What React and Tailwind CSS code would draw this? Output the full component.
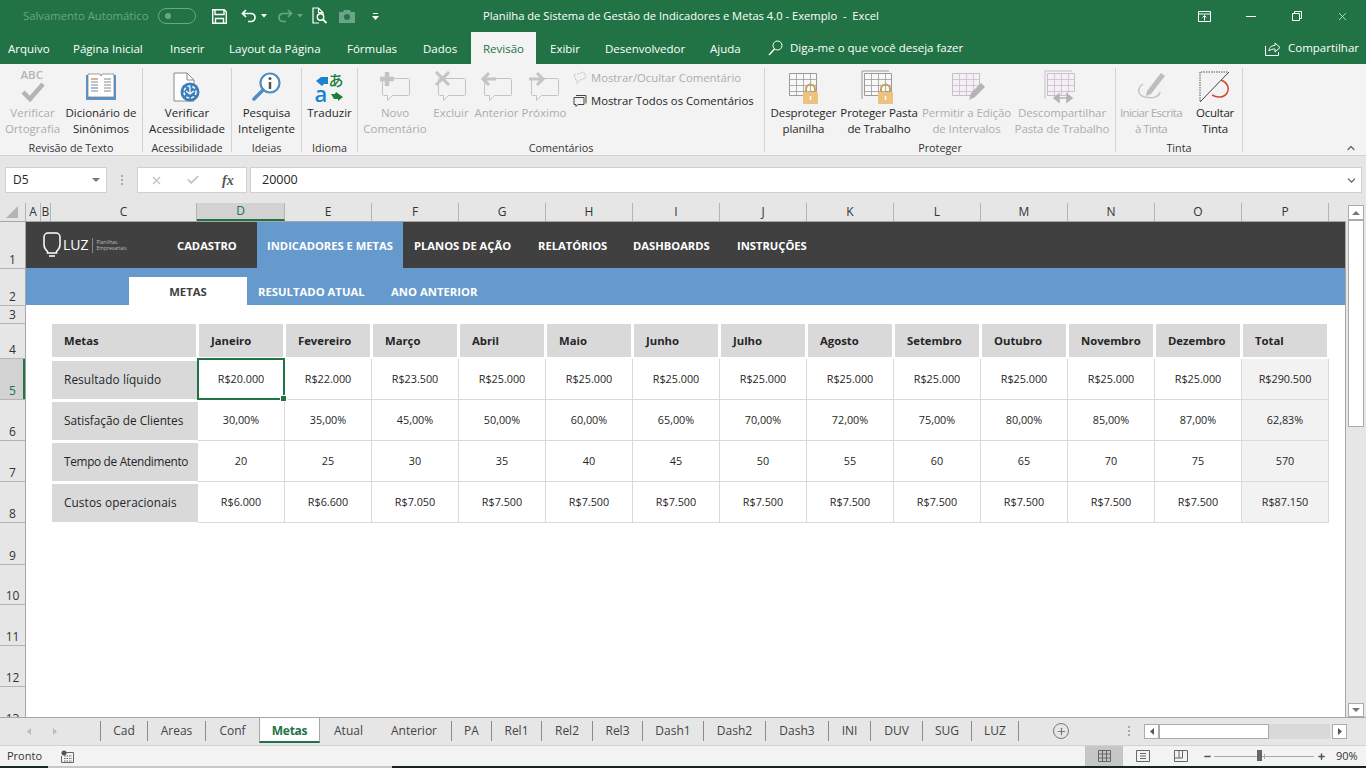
import { ChevronDown, ChevronUp, Minus, Plus, X, Check } from 'lucide-react';

const tabs = [
  ['Arquivo', 'w-[73px] pl-2'],
  ['Página Inicial', 'w-[97px]'],
  ['Inserir', 'w-[59px]'],
  ['Layout da Página', 'w-[118px]'],
  ['Fórmulas', 'w-[76px]'],
  ['Dados', 'w-[48px]'],
];
const tabsAfter = [
  ['Exibir', 'w-[55px]'],
  ['Desenvolvedor', 'w-[105px]'],
  ['Ajuda', 'w-[58px]'],
];
const columns = [
  ['A', 'w-[15px]'], ['B', 'w-[10px]'], ['C', 'w-[146px]'], ['D', 'w-[88px]'], ['E', 'w-[87px]'], ['F', 'w-[87px]'], ['G', 'w-[87px]'],
  ['H', 'w-[87px]'], ['I', 'w-[87px]'], ['J', 'w-[87px]'], ['K', 'w-[87px]'], ['L', 'w-[87px]'], ['M', 'w-[87px]'], ['N', 'w-[87px]'],
  ['O', 'w-[87px]'], ['P', 'w-[87px]'],
];
const rowHeads = [
  ['1', 'h-[47px]'], ['2', 'h-[37px]'], ['3', 'h-[18px]'], ['4', 'h-[35px]'], ['5', 'h-[41px]'], ['6', 'h-[41px]'], ['7', 'h-[41px]'],
  ['8', 'h-[41px]'], ['9', 'h-[42px]'], ['10', 'h-[40px]'], ['11', 'h-[41px]'], ['12', 'h-[41px]'], ['13', 'h-[41px]'],
];
const months = ['Janeiro', 'Fevereiro', 'Março', 'Abril', 'Maio', 'Junho', 'Julho', 'Agosto', 'Setembro', 'Outubro', 'Novembro', 'Dezembro', 'Total'];
const rows = [
  ['Resultado líquido', 'tracking-[0.1px]', ['R$20.000', 'R$22.000', 'R$23.500', 'R$25.000', 'R$25.000', 'R$25.000', 'R$25.000', 'R$25.000', 'R$25.000', 'R$25.000', 'R$25.000', 'R$25.000', 'R$290.500']],
  ['Satisfação de Clientes', '', ['30,00%', '35,00%', '45,00%', '50,00%', '60,00%', '65,00%', '70,00%', '72,00%', '75,00%', '80,00%', '85,00%', '87,00%', '62,83%']],
  ['Tempo de Atendimento', 'tracking-[-0.3px]', ['20', '25', '30', '35', '40', '45', '50', '55', '60', '65', '70', '75', '570']],
  ['Custos operacionais', 'tracking-[0.1px]', ['R$6.000', 'R$6.600', 'R$7.050', 'R$7.500', 'R$7.500', 'R$7.500', 'R$7.500', 'R$7.500', 'R$7.500', 'R$7.500', 'R$7.500', 'R$7.500', 'R$87.150']],
];
const sheets = [
  ['Cad', 'w-[47px]'], ['Areas', 'w-[58px]'], ['Conf', 'w-[53px]'], ['Metas', 'w-[61px]'], ['Atual', 'w-[57px]'], ['Anterior', 'w-[75px]'],
  ['PA', 'w-[40px]'], ['Rel1', 'w-[50px]'], ['Rel2', 'w-[51px]'], ['Rel3', 'w-[50px]'], ['Dash1', 'w-[61px]'], ['Dash2', 'w-[62px]'],
  ['Dash3', 'w-[63px]'], ['INI', 'w-[42px]'], ['DUV', 'w-[52px]'], ['SUG', 'w-[49px]'], ['LUZ', 'w-[47px]'],
];

function Bubble({ mark, dim = true }) {
  const c = dim ? '#c4c4c4' : '#555';
  return (
    <svg width="34" height="32" viewBox="0 0 34 32" fill="none">
      <path d="M5.5 7.5h25a1 1 0 0 1 1 1v15a1 1 0 0 1-1 1h-16l-5 5v-5h-4a1 1 0 0 1-1-1v-15a1 1 0 0 1 1-1z" stroke={c} fill="#f3f3f3" />
      {mark === 'plus' && <path d="M9 1v14M2 8h14" stroke={c} strokeWidth="4.5" />}
      {mark === 'x' && <path d="M2 1l13 13M15 1L2 14" stroke={c} strokeWidth="3" />}
      {mark === 'prev' && <path d="M16 8H4M9 2L3 8l6 6" stroke={c} strokeWidth="3" />}
      {mark === 'next' && <path d="M2 8h13M10 2l6 6-6 6" stroke={c} strokeWidth="3" />}
    </svg>
  );
}

function Grid({ locked, pencil, arrows, double }) {
  const line = locked ? '#9a9a9a' : '#c9bccb';
  return (
    <svg width="36" height="34" viewBox="0 0 36 34" fill="none">
      {double && <path d="M1 29V1h27" stroke={line} />}
      <path d="M3.5 3.500h27v18h-6l-3 4h-18z" fill={locked ? '#f8f8f8' : '#f5f0f6'} stroke={line} />
      <path d="M3.5 9.5h27M3.5 15.5h27M3.5 21.5h21M10.5 3.5v22M17.5 3.5v22M24.5 3.5v18" stroke={line} strokeWidth=".8" />
      {locked && (
        <g>
          <path d="M20 23v-4a4.500 4.500 0 0 1 9 0v4" stroke="#cda05c" strokeWidth="2" />
          <rect x="17" y="22" width="15" height="12" rx="1" fill="#edc27e" />
          <path d="M24.500 26v4" stroke="#fff" strokeWidth="1.5" />
        </g>
      )}
      {pencil && <path d="M20 30l2-7 10-10 4 4-10 10z" fill="#b4b4b4" />}
      {arrows && <path d="M11 28h16M15 24l-5 4 5 4zM23 24l5 4-5 4z" stroke="#b4b4b4" fill="#b4b4b4" strokeWidth="1.5" />}
    </svg>
  );
}

function RibbonBtn({ icon, lines, dim, className, textClass = '' }) {
  return (
    <div className={`flex flex-col items-center ${className}`}>
      <div className="flex h-[37px] items-center justify-center">{icon}</div>
      <div className={`whitespace-nowrap text-center text-[11.5px] leading-4 ${dim ? 'text-[#adadad]' : 'text-[#262626]'} ${textClass}`}>
        {lines.map((l) => <div key={l}>{l}</div>)}
      </div>
    </div>
  );
}

function Group({ label, className, children }) {
  return (
    <div className={`flex h-[84px] flex-col border-r border-[#d2d2d2] ${className}`}>
      <div className="flex flex-1">{children}</div>
      <div className="-mb-[3px] text-center text-[10.8px] leading-[14px] text-[#333]">{label}</div>
    </div>
  );
}

function TitleBar() {
  return (
    <div className="flex h-8 items-center bg-[#217346] text-white">
      <span className="ml-[23px] w-[135px] whitespace-nowrap text-[11.3px] text-[#6aa587]">Salvamento Automático</span>
      <div className="flex h-4 w-[38px] items-center rounded-full border border-[#6aa587] pl-[6px]">
        <div className="size-[6px] rounded-full bg-[#6aa587]" />
      </div>
      <svg className="ml-[16px]" width="15" height="15" viewBox="0 0 15 15" fill="none">
        <path d="M.7.7h11.5l2.1 2.1v11.5H.7z" stroke="#fff" strokeWidth="1.4" />
        <path d="M3 1v4.5h9V1M3.5 14V9.5h8V14" stroke="#fff" strokeWidth="1.4" />
      </svg>
      <svg className="ml-[14px]" width="16" height="14" viewBox="0 0 16 14" fill="none">
        <path d="M5 1L1.5 4.5 5 8M2 4.5h8a4 4 0 0 1 0 8H7" stroke="#fff" strokeWidth="1.7" />
      </svg>
      <svg className="ml-[4px]" width="6" height="4" viewBox="0 0 6 4"><path d="M0 0h6L3 3.5z" fill="#fff" /></svg>
      <svg className="ml-[10px]" width="16" height="14" viewBox="0 0 16 14" fill="none">
        <path d="M11 1l3.5 3.5L11 8M14 4.5H6a4 4 0 0 0 0 8h3" stroke="#6aa587" strokeWidth="1.7" />
      </svg>
      <svg className="ml-[4px]" width="6" height="4" viewBox="0 0 6 4"><path d="M0 0h6L3 3.5z" fill="#6aa587" /></svg>
      <svg className="ml-[9px]" width="16" height="18" viewBox="0 0 16 18" fill="none">
        <path d="M11 8V5.5L6.5 1H1v15h6M6.5 1v4.5H11" stroke="#fff" strokeWidth="1.2" />
        <circle cx="8.5" cy="10" r="3.2" stroke="#fff" strokeWidth="1.4" />
        <path d="M11 12.5l3.5 3.5" stroke="#fff" strokeWidth="1.8" />
      </svg>
      <svg className="ml-[11px]" width="16" height="13" viewBox="0 0 16 13">
        <path d="M0 2h4l1-2h6l1 2h4v11H0z" fill="#6aa587" />
        <circle cx="8" cy="7" r="3" fill="#217346" />
      </svg>
      <svg className="ml-[17px]" width="7" height="7" viewBox="0 0 7 7" fill="#fff">
        <path d="M1 0h5v1H1zM0 3h7L3.5 7z" />
      </svg>
      <span className="ml-[104px] whitespace-nowrap text-[11.2px]">Planilha de Sistema de Gestão de Indicadores e Metas 4.0 - Exemplo&nbsp; -&nbsp; Excel</span>
      <div className="ml-auto flex items-center">
        <svg width="13" height="11" viewBox="0 0 13 11" fill="none">
          <path d="M.5.5h12v10H.5zM.5 3h12M6.5 9.5V4.5M4.5 6.5l2-2 2 2" stroke="#fff" />
        </svg>
        <div className="ml-[35px] h-px w-[10px] bg-white" />
        <svg className="ml-[36px]" width="10" height="10" viewBox="0 0 10 10" fill="none">
          <path d="M.5 2.5h7v7h-7zM2.5 2.5v-2h7v7h-2" stroke="#fff" />
        </svg>
        <X className="ml-[34px] mr-[17px] size-[13px]" strokeWidth={1.2} absoluteStrokeWidth />
      </div>
    </div>
  );
}

function TabsBar() {
  return (
    <div className="flex h-8 items-end bg-[#217346] text-[11.5px] text-white">
      {tabs.map(([t, w]) => <div key={t} className={`${w} h-8 shrink-0 leading-[34px]`}>{t}</div>)}
      <div className="h-8 w-[65px] shrink-0 bg-[#f3f3f3] text-center leading-[34px] text-[#217346]">Revisão</div>
      <div className="w-[14px] shrink-0" />
      {tabsAfter.map(([t, w]) => <div key={t} className={`${w} h-8 shrink-0 leading-[34px]`}>{t}</div>)}
      <div className="flex h-8 items-center gap-[7px]">
        <svg width="15" height="16" viewBox="0 0 15 16" fill="none">
          <circle cx="9.5" cy="5.5" r="4.5" stroke="#fff" />
          <path d="M6.5 9L1 15" stroke="#fff" strokeWidth="1.4" />
        </svg>
        <span className="whitespace-nowrap">Diga-me o que você deseja fazer</span>
      </div>
      <div className="ml-auto mr-[7px] flex h-8 items-center gap-[7px]">
        <svg width="16" height="15" viewBox="0 0 16 15" fill="none">
          <path d="M.5 5v9.5h13V11M4 10c0-4 3-5.5 6-5.5V2l5 4.5-5 4.5V8c-2.5 0-4.500.5-6 2z" stroke="#fff" />
        </svg>
        <span>Compartilhar</span>
      </div>
    </div>
  );
}

function Ribbon() {
  return (
    <div className="relative flex h-[92px] items-start border-b border-[#d2d2d2] bg-[#f3f3f3] pt-1">
      <Group label="Revisão de Texto" className="w-[143px]">
        <RibbonBtn dim className="ml-[3px] w-[59px]" lines={['Verificar', 'Ortografia']} icon={
          <div className="relative h-[36px] w-[28px]">
            <span className="absolute left-[2px] top-0 text-[11.5px] font-semibold leading-3 text-[#b4b4b4]">ABC</span>
            <svg className="absolute left-[2px] top-[13px]" width="24" height="20" viewBox="0 0 24 20" fill="none"><path d="M2 10l7 7L22 2" stroke="#b4b4b4" strokeWidth="4.5" /></svg>
          </div>
        } />
        <RibbonBtn className="w-[78px]" lines={['Dicionário de', 'Sinônimos']} icon={
          <svg width="32" height="28" viewBox="0 0 32 28" fill="none">
            <path d="M1 2h30v25H1z" fill="#5b94c9" />
            <path d="M3 1h12l1 2 1-2h12v23H3z" fill="#fff" stroke="#777" strokeWidth=".7" />
            <path d="M6 6h7" stroke="#d2553a" /><path d="M6 9h7M6 12h7" stroke="#888" /><path d="M6 15h7" stroke="#3e7fbf" /><path d="M6 18h7" stroke="#888" />
            <path d="M19 6h7M19 9h7M19 12h7M19 15h7M19 18h7" stroke="#888" />
          </svg>
        } />
      </Group>
      <Group label="Acessibilidade" className="w-[89px]">
        <RibbonBtn className="w-full" lines={['Verificar', 'Acessibilidade']} icon={
          <svg width="28" height="30" viewBox="0 0 28 30" fill="none">
            <path d="M1 1h13l7 7v21H1z" fill="#fff" stroke="#8a8a8a" />
            <path d="M14 1v7h7" stroke="#8a8a8a" />
            <circle cx="17" cy="20" r="9.500" fill="#3d7eb8" />
            <circle cx="17" cy="20" r="6" stroke="#fff" strokeWidth="1.5" strokeDasharray="3 2" />
            <path d="M17 15v6M13 19l4 3 4-3" stroke="#fff" strokeWidth="1.3" />
          </svg>
        } />
      </Group>
      <Group label="Ideias" className="w-[70px]">
        <RibbonBtn className="w-full" lines={['Pesquisa', 'Inteligente']} icon={
          <svg width="30" height="30" viewBox="0 0 30 30" fill="none">
            <circle cx="18" cy="11" r="9.500" fill="#fff" stroke="#4d8cc4" strokeWidth="2.200" />
            <path d="M11 18L2 27" stroke="#4d8cc4" strokeWidth="3.500" strokeLinecap="round" />
            <circle cx="18" cy="6.500" r="1.500" fill="#555" />
            <path d="M18 10v7" stroke="#555" strokeWidth="2.500" />
          </svg>
        } />
      </Group>
      <Group label="Idioma" className="w-[56px]">
        <RibbonBtn className="w-full" lines={['Traduzir']} icon={
          <div className="relative h-[30px] w-[28px]">
            <span className="absolute right-0 top-[-1px] font-['Noto_Sans_CJK_JP',sans-serif] text-[15px] font-medium leading-[17px] text-[#1d7f3c]">あ</span>
            <span className="absolute bottom-[-2px] left-[-1px] text-[22px] font-semibold leading-[22px] text-[#1b82d1]">a</span>
            <svg className="absolute left-0 top-[5px]" width="12" height="9" viewBox="0 0 12 9"><path d="M12 0v7H8L6 9 0 4l5-4z" fill="#1b82d1" /></svg>
            <svg className="absolute bottom-[1px] right-[1px]" width="12" height="9" viewBox="0 0 12 9"><path d="M0 2h4l1-2 7 5-5 4V7H3z" fill="#1d7f3c" /></svg>
          </div>
        } />
      </Group>
      <Group label="Comentários" className="w-[407px]">
        <RibbonBtn dim className="ml-[2px] w-[70px]" lines={['Novo', 'Comentário']} icon={<Bubble mark="plus" />} />
        <RibbonBtn dim className="w-[42px]" lines={['Excluir']} icon={<Bubble mark="x" />} />
        <RibbonBtn dim className="ml-[1px] w-[47px]" lines={['Anterior']} icon={<Bubble mark="prev" />} />
        <RibbonBtn dim className="w-[48px]" lines={['Próximo']} icon={<Bubble mark="next" />} />
        <div className="ml-[5px] flex flex-col gap-[7px] pt-[2px] text-[11.3px] leading-4">
          <div className="flex items-center gap-[4px] text-[#adadad]">
            <svg width="14" height="14" viewBox="0 0 14 14" fill="none"><path d="M1 4l10-3 2 6-6 2-3 4V9L3 9z" stroke="#c4c4c4" strokeDasharray="2 1" /></svg>
            <span className="whitespace-nowrap">Mostrar/Ocultar Comentário</span>
          </div>
          <div className="flex items-center gap-[4px] text-[#262626]">
            <svg width="14" height="14" viewBox="0 0 14 14" fill="none"><path d="M3 1.500h10v8M1 3.500h10v7H5l-2 2v-2H1z" stroke="#444" /></svg>
            <span className="whitespace-nowrap">Mostrar Todos os Comentários</span>
          </div>
        </div>
      </Group>
      <Group label="Proteger" className="w-[351px]">
        <RibbonBtn className="ml-[2px] w-[73px]" lines={['Desproteger', 'planilha']} textClass="tracking-[-0.1px]" icon={<Grid locked />} />
        <RibbonBtn className="w-[78px]" lines={['Proteger Pasta', 'de Trabalho']} textClass="tracking-[-0.1px]" icon={<Grid locked double />} />
        <RibbonBtn dim className="ml-[1px] w-[95px]" lines={['Permitir a Edição', 'de Intervalos']} textClass="tracking-[-0.1px]" icon={<Grid pencil />} />
        <RibbonBtn dim className="w-[96px]" lines={['Descompartilhar', 'Pasta de Trabalho']} textClass="tracking-[-0.1px]" icon={<Grid arrows double />} />
      </Group>
      <Group label="Tinta" className="w-[127px]">
        <RibbonBtn dim className="w-[69px]" lines={['Iniciar Escrita', 'à Tinta']} textClass="tracking-[-0.6px] ml-[1px]" icon={
          <svg width="32" height="32" viewBox="0 0 32 32" fill="none">
            <path d="M12 20L26 2l4 3-14 18-5 2z" fill="#bdbdbd" />
            <path d="M8 13c-6 4-6 11 2 13s14 0 15-5" stroke="#c4c4c4" strokeWidth="1.500" />
          </svg>
        } />
        <RibbonBtn className="ml-[5px] w-[50px]" lines={['Ocultar', 'Tinta']} textClass="tracking-[-0.2px]" icon={
          <svg width="32" height="32" viewBox="0 0 32 32" fill="none">
            <path d="M1 30V1h28" stroke="#555" strokeDasharray="1.500 1" />
            <path d="M30 1L1 31" stroke="#444" />
            <path d="M22 9c6 2 9 8 6 13s-10 5-15 2" stroke="#d1492e" strokeWidth="1.500" />
          </svg>
        } />
      </Group>
      <ChevronUp className="absolute bottom-[1px] right-[9px] size-[12px] text-[#666]" strokeWidth={2.500} />
    </div>
  );
}

function FormulaBar() {
  return (
    <div className="flex h-[47px] items-start bg-[#e6e6e6] pl-[5px] pt-[11px]">
      <div className="flex h-[26px] w-[102px] items-center justify-between border border-[#d0d0d0] bg-white pl-[7px] pr-[6px] text-[12px] text-[#262626]">
        D5
        <svg width="8" height="4" viewBox="0 0 8 4"><path d="M0 0h8L4 4z" fill="#777" /></svg>
      </div>
      <div className="ml-[14px] mt-[8px] flex h-[10px] flex-col justify-between">
        <div className="size-[2px] bg-[#aaa]" /><div className="size-[2px] bg-[#aaa]" /><div className="size-[2px] bg-[#aaa]" />
      </div>
      <div className="ml-[14px] flex h-[26px] w-[110px] items-center border border-[#d0d0d0] bg-white pl-[12px]">
        <X className="size-[13px] text-[#c0c0c0]" strokeWidth={2} />
        <Check className="ml-[23px] size-[14px] text-[#c0c0c0]" strokeWidth={3} />
        <span className="ml-[22px] font-['Liberation_Serif',serif] text-[14px] font-bold italic text-[#555]">fx</span>
      </div>
      <div className="ml-[3px] flex h-[26px] w-[1112px] items-center justify-between border border-[#d0d0d0] bg-white pl-[11px] pr-[3px] text-[12.5px] text-[#262626]">
        20000
        <ChevronDown className="size-[13px] text-[#555]" strokeWidth={2} />
      </div>
    </div>
  );
}

function ColumnHeads() {
  return (
    <div className="flex h-[18px] bg-[#e6e6e6] text-[12px] leading-[18px] text-[#333]">
      <div className="flex w-[26px] items-center justify-center border-r border-[#b4b4b4]">
        <svg className="ml-[-2px]" width="12" height="12" viewBox="0 0 12 12"><path d="M12 0v12H0z" fill="#b4b4b4" /></svg>
      </div>
      {columns.map(([c, w]) => (
        <div key={c} className={`${w} shrink-0 border-r border-[#b4b4b4] text-center ${c === 'D' ? 'border-b-2 border-b-[#217346] bg-[#d2d2d2] leading-[16px] text-[#217346]' : ''}`}>{c}</div>
      ))}
    </div>
  );
}

function RowHeads() {
  return (
    <div className="h-[496px] w-[26px] shrink-0 overflow-hidden border-r border-t border-[#a6a6a6] bg-[#e6e6e6] text-[12px] text-[#333]">
      {rowHeads.map(([r, h]) => (
        <div key={r} className={`${h} relative flex items-end justify-center overflow-hidden border-b border-[#b4b4b4] leading-[17px] ${r === '5' ? 'bg-[#d2d2d2] text-[#217346]' : ''}`}>
          {r}
          {r === '5' && <div className="absolute bottom-0 right-0 top-0 w-[2px] bg-[#217346]" />}
        </div>
      ))}
    </div>
  );
}

function Sheet() {
  return (
    <div className="h-[496px] w-[1320px] shrink-0 border-r border-t border-[#a6a6a6] bg-white font-['Open_Sans',sans-serif]">
      <div className="flex h-[46px] items-stretch bg-[#404040] text-[11.2px] font-bold text-white">
        <div className="ml-[17px] flex w-[108px] items-center">
          <svg width="18" height="26" viewBox="0 0 18 26" fill="none">
            <path d="M5 1h8a4 4 0 0 1 4 4v8c0 3-2 5-3.500 6.500V21h-9v-1.500C3 18 1 16 1 13V5a4 4 0 0 1 4-4zM6 24h6" stroke="#fff" strokeWidth="1.500" />
          </svg>
          <span className="ml-[2px] text-[14px] font-normal leading-none">LUZ</span>
          <div className="ml-[3px] h-[15px] w-px bg-[#888]" />
          <div className="ml-[4px] whitespace-nowrap text-[5px] font-normal leading-[6px] text-[#bbb]">Planilhas<br />Empresariais</div>
        </div>
        <div className="ml-[26px] flex w-[80px] items-center pt-[2px]">CADASTRO</div>
        <div className="flex w-[146px] items-center justify-center whitespace-nowrap bg-[#6699cc] pt-[2px]">INDICADORES E METAS</div>
        <div className="ml-[11px] flex w-[124px] items-center whitespace-nowrap pt-[2px]">PLANOS DE AÇÃO</div>
        <div className="flex w-[95px] items-center pt-[2px]">RELATÓRIOS</div>
        <div className="flex w-[104px] items-center pt-[2px]">DASHBOARDS</div>
        <div className="flex items-center pt-[2px]">INSTRUÇÕES</div>
      </div>
      <div className="flex h-[37px] items-end bg-[#6699cc] text-[11.3px] font-bold text-white">
        <div className="ml-[103px] flex h-[28px] w-[118px] items-center justify-center bg-white pt-[2px] text-[#404040]">METAS</div>
        <div className="ml-[11px] flex h-[28px] w-[133px] items-center whitespace-nowrap pt-[2px]">RESULTADO ATUAL</div>
        <div className="flex h-[28px] items-center whitespace-nowrap pt-[2px]">ANO ANTERIOR</div>
      </div>
      <div className="flex flex-col pl-[26px] pt-[19px] text-[10.8px] text-[#262626]">
        <div className="flex h-[33px] gap-[3px] text-[11.3px] font-bold">
          <div className="flex w-[144px] items-center bg-[#d9d9d9] pl-3 pt-[2px]">Metas</div>
          {months.map((m) => (
            <div key={m} className="flex w-[84px] items-center bg-[#d9d9d9] pl-3 pt-[2px]">{m}</div>
          ))}
        </div>
        <div className="h-[2px]" />
        {rows.map(([label, spacing, values], r) => (
          <div key={label} className="flex h-[41px]">
            <div className="flex w-[146px] shrink-0 items-center pt-px">
              <div className={`flex h-[38px] w-full items-center whitespace-nowrap bg-[#d9d9d9] pl-3 text-[11.8px] ${spacing}`}>{label}</div>
            </div>
            {values.map((v, i) => {
              const selected = r === 0 && i === 0;
              return (
                <div key={i} className={`relative flex w-[87px] shrink-0 items-center justify-center border-b border-r border-[#d9d9d9] ${i === 12 ? 'bg-[#f2f2f2]' : ''} ${selected ? 'z-10' : ''}`}>
                  {v}
                  {selected && (
                    <div className="absolute -bottom-px -left-[1px] -right-px -top-px border-2 border-[#217346]">
                      <div className="absolute -bottom-[4px] -right-[4px] size-[7px] border border-white bg-[#217346]" />
                    </div>
                  )}
                </div>
              );
            })}
          </div>
        ))}
      </div>
    </div>
  );
}

function VScroll() {
  return (
    <div className="ml-[2px] flex h-[514px] w-[16px] shrink-0 flex-col items-stretch pt-[2px]">
      <div className="flex h-[15px] items-center justify-center border border-[#ababab] bg-white">
        <svg width="8" height="4" viewBox="0 0 8 4"><path d="M0 4h8L4 0z" fill="#777" /></svg>
      </div>
      <div className="h-[207px] border border-[#ababab] bg-white" />
      <div className="flex-1 bg-[#e6e6e6]" />
      <div className="flex h-[14px] items-center justify-center border border-[#ababab] bg-white">
        <svg width="8" height="4" viewBox="0 0 8 4"><path d="M0 0h8L4 4z" fill="#777" /></svg>
      </div>
    </div>
  );
}

function SheetTabs() {
  return (
    <div className="flex h-[28px] border-t border-[#a6a6a6] bg-[#e6e6e6] text-[12px] text-[#444]">
      <div className="flex w-[100px] shrink-0 items-center gap-[22px] pl-[27px]">
        <svg width="4" height="7" viewBox="0 0 4 7"><path d="M4 0v7L0 3.500z" fill="#bbb" /></svg>
        <svg width="4" height="7" viewBox="0 0 4 7"><path d="M0 0v7l4-3.500z" fill="#bbb" /></svg>
      </div>
      <div className="mt-[3px] h-[20px] border-l border-[#8c8c8c]" />
      {sheets.map(([s, w]) => s === 'Metas' ? (
        <div key={s} className={`${w} -mt-px h-[26px] shrink-0 border-x border-t border-[#a6a6a6] border-b-2 border-b-[#217346] bg-white text-center font-bold leading-[25px] tracking-[-0.3px] text-[#217346]`}>{s}</div>
      ) : (
        <div key={s} className="flex">
          <div className={`${w} mt-[3px] h-[20px] shrink-0 text-center leading-[20px] ${s === 'Conf' || s === 'Atual' ? '' : 'border-r border-[#8c8c8c]'}`}>{s}</div>
        </div>
      ))}
      <div className="ml-[34px] mt-[5px] flex size-[16px] items-center justify-center rounded-full border border-[#777]">
        <Plus className="size-[11px] text-[#777]" strokeWidth={2.500} />
      </div>
      <div className="ml-[59px] mt-[8px] flex h-[10px] flex-col justify-between">
        <div className="size-[2px] bg-[#aaa]" /><div className="size-[2px] bg-[#aaa]" /><div className="size-[2px] bg-[#aaa]" />
      </div>
      <div className="ml-[14px] mt-[6px] flex h-[15px] w-[203px]">
        <div className="flex w-[15px] items-center justify-center border border-[#ababab] bg-white">
          <svg width="4" height="7" viewBox="0 0 4 7"><path d="M4 0v7L0 3.500z" fill="#555" /></svg>
        </div>
        <div className="w-[110px] border border-[#ababab] bg-white" />
        <div className="w-[61px] bg-[#d9d9d9]" />
        <div className="ml-[2px] flex w-[15px] items-center justify-center border border-[#ababab] bg-white">
          <svg width="4" height="7" viewBox="0 0 4 7"><path d="M0 0v7l4-3.500z" fill="#555" /></svg>
        </div>
      </div>
    </div>
  );
}

function StatusBar() {
  return (
    <div className="flex h-[21px] items-center border-t border-[#d2d2d2] bg-[#f3f3f3] text-[11px] text-[#333]">
      <span className="ml-[7px]">Pronto</span>
      <svg className="ml-[19px]" width="13" height="13" viewBox="0 0 13 13" fill="none">
        <circle cx="3" cy="3" r="2.500" fill="#555" />
        <path d="M5 2.500h7.500v10H.5V6" stroke="#666" />
        <path d="M3 6h8M3 8.500h8M3 11h8" stroke="#666" strokeDasharray="1.500 1" />
      </svg>
      <div className="ml-[1011px] flex h-[21px] w-[38px] items-center justify-center bg-[#c6c6c6]">
        <svg width="13" height="12" viewBox="0 0 13 12" fill="none"><path d="M.5.500h12v11H.5zM.5 4h12M.5 8h12M4.500.500v11M8.500.500v11" stroke="#666" /></svg>
      </div>
      <svg className="ml-[13px]" width="14" height="12" viewBox="0 0 14 12" fill="none"><path d="M.5.500h13v11H.5zM4 3.500h6M4 6h6M4 8.500h6" stroke="#666" /></svg>
      <svg className="ml-[24px]" width="14" height="12" viewBox="0 0 14 12" fill="none"><path d="M.5.500h13v11H.5zM.5 8h8V.500M5 .500V8" stroke="#666" /></svg>
      <Minus className="ml-[15px] size-[9px] text-[#555]" strokeWidth={4} />
      <div className="relative ml-[2px] h-px w-[100px] bg-[#aaa]">
        <div className="absolute left-[43px] top-[-6px] h-[11px] w-[5px] bg-[#666]" />
        <div className="absolute left-[50px] top-[-2px] h-[5px] w-px bg-[#aaa]" />
      </div>
      <Plus className="ml-[3px] size-[9px] text-[#555]" strokeWidth={4} />
      <span className="ml-[10px]">90%</span>
    </div>
  );
}

function App() {
  return (
    <div className="h-[768px] w-[1366px] overflow-hidden bg-[#e6e6e6] font-['Open_Sans',sans-serif]">
      <TitleBar />
      <TabsBar />
      <Ribbon />
      <FormulaBar />
      <div className="flex">
        <div className="w-[1346px] shrink-0">
          <ColumnHeads />
          <div className="flex">
            <RowHeads />
            <Sheet />
          </div>
        </div>
        <VScroll />
      </div>
      <SheetTabs />
      <StatusBar />
      <div className="flex h-[2px]">
        <div className="w-[48px] bg-[#1b2a24]" />
        <div className="w-[344px] bg-[#c8c8c8]" />
        <div className="flex-1 bg-[#18241f]" />
      </div>
    </div>
  );
}

export default App;
